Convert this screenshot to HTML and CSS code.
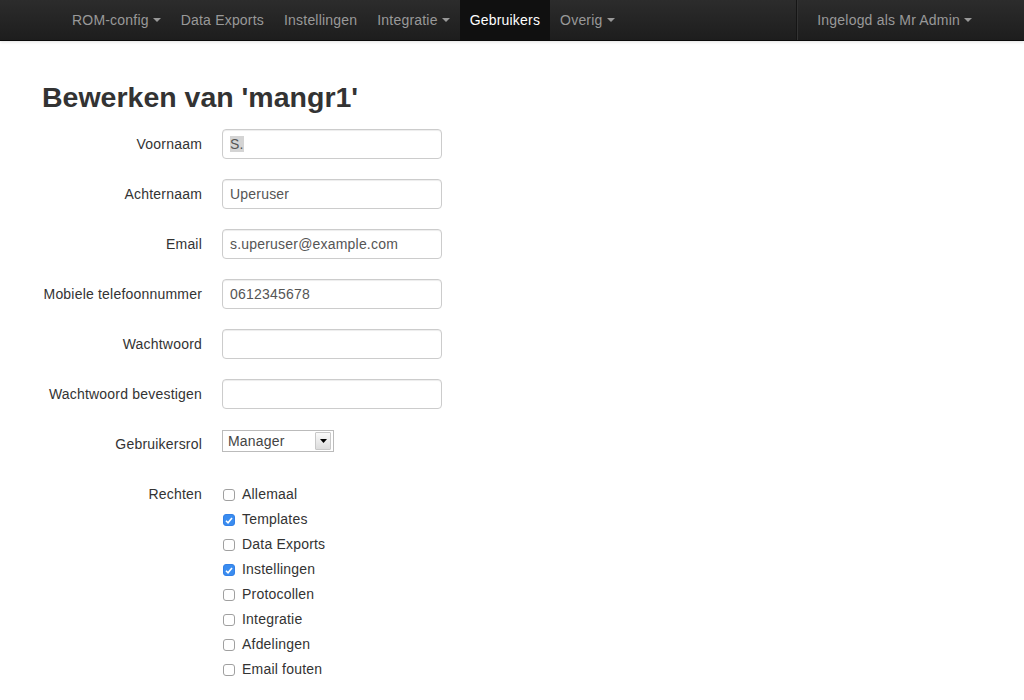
FILE: index.html
```html
<!DOCTYPE html>
<html lang="nl">
<head>
<meta charset="utf-8">
<title>Bewerken van 'mangr1'</title>
<link rel="stylesheet" href="styles.css">
</head>
<body>
<header class="navbar">
  <ul class="nav">
    <li><a href="#">ROM-config<b class="caret"></b></a></li>
    <li><a href="#">Data Exports</a></li>
    <li><a href="#">Instellingen</a></li>
    <li><a href="#">Integratie<b class="caret"></b></a></li>
    <li class="active"><a href="#">Gebruikers</a></li>
    <li><a href="#">Overig<b class="caret"></b></a></li>
  </ul>
  <ul class="nav nav-right">
    <li class="divider"></li>
    <li><a href="#">Ingelogd als Mr Admin<b class="caret"></b></a></li>
  </ul>
</header>
<main class="container">
  <h1 class="title">Bewerken van 'mangr1'</h1>
  <form class="form">
    <div class="group"><label class="label">Voornaam</label><div class="controls"><div class="input"><span class="sel">S.</span></div></div></div>
    <div class="group"><label class="label">Achternaam</label><div class="controls"><div class="input">Uperuser</div></div></div>
    <div class="group"><label class="label">Email</label><div class="controls"><div class="input">s.uperuser@example.com</div></div></div>
    <div class="group"><label class="label">Mobiele telefoonnummer</label><div class="controls"><div class="input">0612345678</div></div></div>
    <div class="group"><label class="label">Wachtwoord</label><div class="controls"><div class="input"></div></div></div>
    <div class="group"><label class="label">Wachtwoord bevestigen</label><div class="controls"><div class="input"></div></div></div>
    <div class="group"><label class="label">Gebruikersrol</label><div class="controls"><div class="select"><span class="select-text">Manager</span><span class="select-btn"><svg width="7" height="4" viewBox="0 0 7 4"><path d="M0 0H7L3.5 4Z" fill="#000"/></svg></span></div></div></div>
    <div class="group"><label class="label">Rechten</label>
      <div class="controls checks">
        <div class="check"><span class="cb"></span>Allemaal</div>
        <div class="check"><span class="cb on"><svg width="8" height="7" viewBox="0 0 8 7"><path d="M1 3.8L3 5.8L7 1" fill="none" stroke="#fff" stroke-width="1.6"/></svg></span>Templates</div>
        <div class="check"><span class="cb"></span>Data Exports</div>
        <div class="check"><span class="cb on"><svg width="8" height="7" viewBox="0 0 8 7"><path d="M1 3.8L3 5.8L7 1" fill="none" stroke="#fff" stroke-width="1.6"/></svg></span>Instellingen</div>
        <div class="check"><span class="cb"></span>Protocollen</div>
        <div class="check"><span class="cb"></span>Integratie</div>
        <div class="check"><span class="cb"></span>Afdelingen</div>
        <div class="check"><span class="cb"></span>Email fouten</div>
      </div>
    </div>
  </form>
</main>
</body>
</html>
```
FILE: styles.css
```css
html, body { margin: 0; padding: 0; }
body {
  font-family: "Liberation Sans", Arial, sans-serif;
  font-size: 14px;
  line-height: 20px;
  letter-spacing: 0.2px;
  color: #333;
  background: #fff;
}
.navbar {
  height: 40px;
  display: flex;
  justify-content: space-between;
  padding: 0 42px 0 62px;
  background: linear-gradient(#2c2c2c, #1d1d1d);
  border-bottom: 1px solid #0a0a0a;
  box-shadow: 0 1px 3px rgba(0,0,0,0.12);
}
.nav { display: flex; list-style: none; margin: 0; padding: 0; }
.nav a {
  display: block;
  padding: 10px 10px;
  color: #999;
  text-decoration: none;
  line-height: 20px;
}
.nav .active a { background: #101010; color: #fff; }
.caret {
  display: inline-block;
  vertical-align: top;
  margin-top: 8px;
  margin-left: 4px;
  width: 0; height: 0;
  border-top: 4px solid #999;
  border-left: 4px solid transparent;
  border-right: 4px solid transparent;
}
.divider {
  height: 40px;
  margin-right: 9px;
  border-left: 1px solid #151515;
  border-right: 1px solid #333;
}
.container { padding: 36px 42px 0; }
.title {
  margin: 0 0 12px;
  font-size: 28.5px;
  line-height: 40px;
  font-weight: bold;
  letter-spacing: 0;
  color: #333;
}
.group {
  display: grid;
  grid-template-columns: 160px 1fr;
  column-gap: 20px;
  margin-bottom: 20px;
}
.label { text-align: right; padding-top: 5px; }
.input {
  box-sizing: border-box;
  width: 220px;
  height: 30px;
  padding: 4px 7px;
  border: 1px solid #ccc;
  border-radius: 4px;
  box-shadow: inset 0 1px 1px rgba(0,0,0,0.075);
  color: #555;
  line-height: 20px;
}
.sel { background: #d4d4d4; }
.select {
  box-sizing: border-box;
  margin: 1px 0 7px;
  width: 112px;
  height: 22px;
  border: 1px solid #bbb;
  display: flex;
  align-items: center;
  padding: 0 2px 0 5px;
  background: #fff;
  color: #444;
}
.select-text { flex: 1; line-height: 18px; }
.select-btn {
  width: 14px;
  height: 16px;
  display: flex;
  align-items: center;
  justify-content: center;
  background: linear-gradient(#fafafa, #dcdcdc);
  border: 1px solid #c8c8c8;
  border-radius: 1px;
}
.checks { display: flex; flex-direction: column; gap: 5px; padding-top: 5px; }
.check { display: flex; align-items: center; line-height: 20px; }
.cb {
  box-sizing: border-box;
  width: 12px;
  height: 12px;
  margin: 2px 7px 0 1px;
  border: 1px solid #a0a0a0;
  border-radius: 3px;
  background: #fff;
  display: flex;
  align-items: center;
  justify-content: center;
}
.cb.on { background: #3a8cf0; border-color: #3380e6; }
```
